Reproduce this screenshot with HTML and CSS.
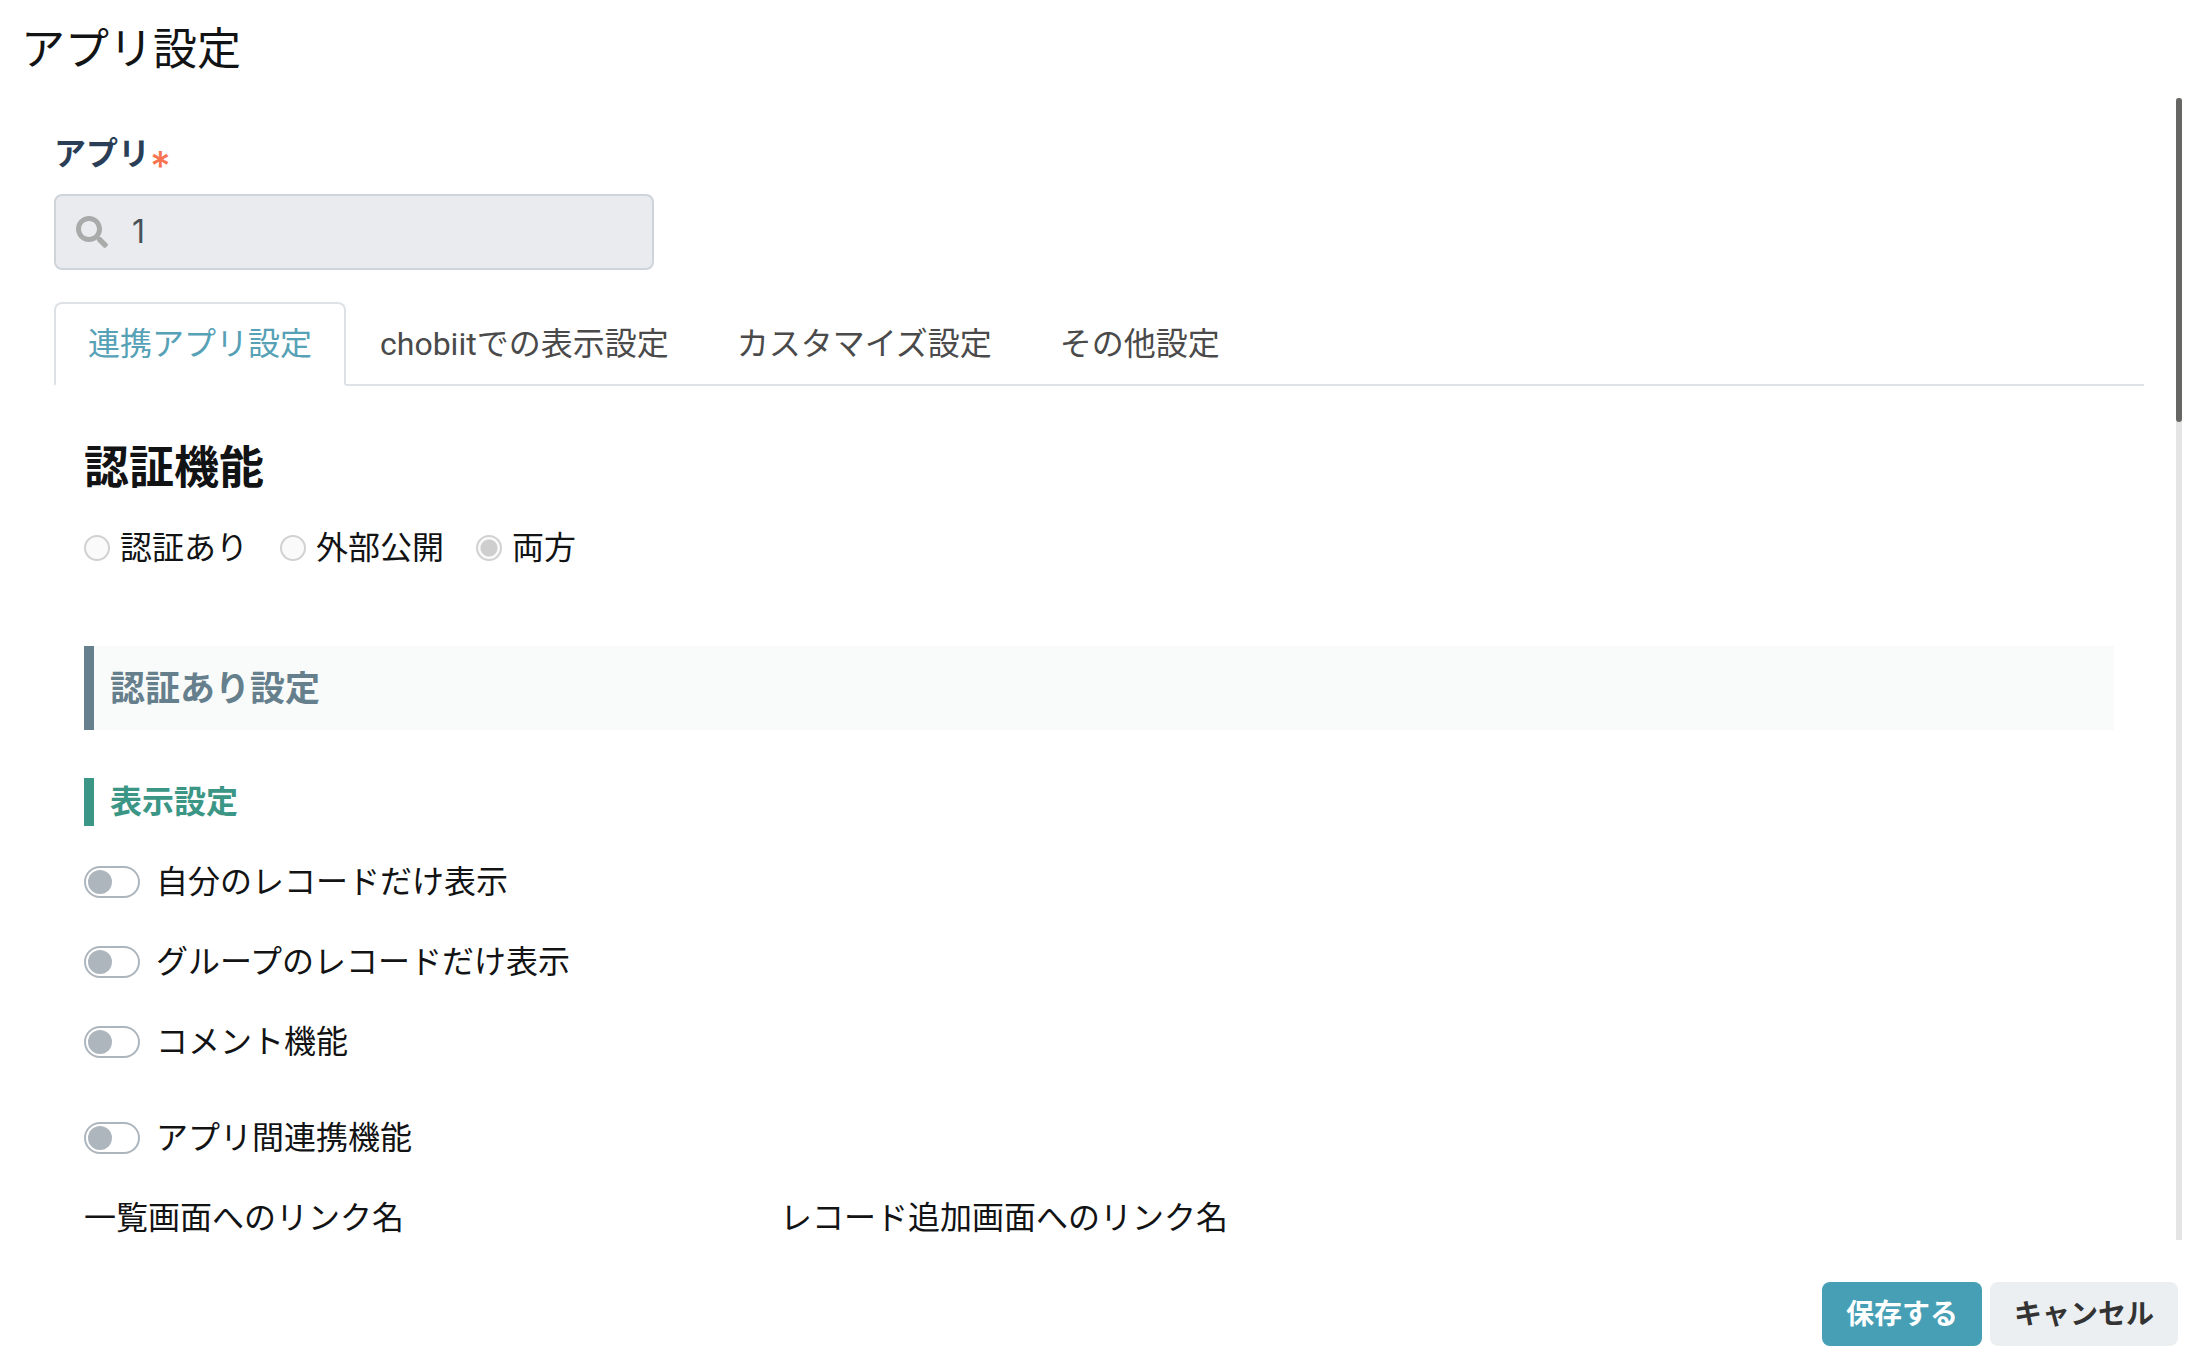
FILE: index.html
```html
<!DOCTYPE html>
<html lang="ja">
<head>
<meta charset="utf-8">
<meta name="viewport" content="width=device-width, initial-scale=1">
<title>アプリ設定</title>
<link rel="stylesheet" href="styles.css">
</head>
<body>
<main class="dialog">
  <header class="dialog-header">
    <h1 class="dialog-title">アプリ設定</h1>
  </header>

  <div class="dialog-body">
    <div class="content">
      <label class="field-label" for="app">アプリ<span class="required">*</span></label>
      <div class="search-field">
        <svg class="search-icon" viewBox="0 0 512 512" aria-hidden="true"><path d="M505 442.700L405.300 343c-4.500-4.500-10.600-7-17-7H372c27.600-35.300 44-79.700 44-128C416 93.100 322.900 0 208 0S0 93.100 0 208s93.100 208 208 208c48.300 0 92.700-16.400 128-44v16.300c0 6.400 2.500 12.500 7 17l99.700 99.700c9.400 9.400 24.600 9.400 33.900 0l28.300-28.300c9.400-9.400 9.400-24.600.1-34zM208 336c-70.700 0-128-57.200-128-128 0-70.700 57.200-128 128-128 70.700 0 128 57.200 128 128 0 70.700-57.200 128-128 128z"/></svg>
        <input class="search-input" id="app" type="text" value="1" disabled>
      </div>

      <nav class="tabs">
        <a class="tab tab-active" href="#link">連携アプリ設定</a>
        <a class="tab" href="#display">chobiitでの表示設定</a>
        <a class="tab" href="#customize">カスタマイズ設定</a>
        <a class="tab" href="#other">その他設定</a>
      </nav>

      <section class="panel" id="link">
        <h2 class="panel-title">認証機能</h2>
        <div class="radios">
          <label class="radio"><input type="radio" name="auth" disabled>認証あり</label>
          <label class="radio"><input type="radio" name="auth" disabled>外部公開</label>
          <label class="radio"><input type="radio" name="auth" disabled checked>両方</label>
        </div>

        <h3 class="banner">認証あり設定</h3>
        <h4 class="section-title">表示設定</h4>

        <div class="switches">
          <label class="switch"><input type="checkbox">自分のレコードだけ表示</label>
          <label class="switch"><input type="checkbox">グループのレコードだけ表示</label>
          <label class="switch"><input type="checkbox">コメント機能</label>
        </div>
        <div class="switches switches-linked">
          <label class="switch"><input type="checkbox">アプリ間連携機能</label>
        </div>

        <div class="link-names">
          <span>一覧画面へのリンク名</span>
          <span>レコード追加画面へのリンク名</span>
        </div>
      </section>
    </div>
    <div class="rail"><div class="rail-thumb"></div></div>
  </div>

  <footer class="dialog-footer">
    <button class="button button-primary" type="button">保存する</button>
    <button class="button" type="button">キャンセル</button>
  </footer>
</main>
</body>
</html>
```

FILE: styles.css
```css
* {
  box-sizing: border-box;
}

body {
  margin: 0;
  background: #fff;
  color: #121314;
  font-family: Inter, "Noto Sans CJK JP", sans-serif;
  font-size: 32px;
  line-height: 48px;
}

h1, h2, h3, h4 {
  margin: 0;
}

.dialog {
  display: flex;
  flex-direction: column;
  height: 100vh;
}

.dialog-header {
  padding: 17px 21px;
}

.dialog-title {
  font-size: 44px;
  font-weight: 400;
  line-height: 64px;
}

.dialog-body {
  display: flex;
  flex: 1;
  gap: 32px;
  min-height: 0;
  padding: 0 22px 0 54px;
}

.content {
  flex: 1;
  min-width: 0;
  padding-top: 32px;
  overflow: auto;
  scrollbar-width: none;
}

.rail {
  width: 6px;
  background: #e5e5e5;
}

.rail-thumb {
  height: 28%;
  min-height: 324px;
  border-radius: 3px;
  background: #666664;
}

.field-label {
  display: flex;
  height: 48px;
  margin-bottom: 16px;
  color: #2a3f57;
  font-weight: 700;
}

.required {
  color: #f8734f;
  font-size: 40px;
  font-weight: 500;
  line-height: 72px;
}

.search-field {
  display: flex;
  align-items: center;
  gap: 24px;
  max-width: 600px;
  height: 76px;
  margin-bottom: 32px;
  padding: 0 20px;
  border: 2px solid #ced4da;
  border-radius: 8px;
  background: #e9ebef;
}

.search-icon {
  width: 32px;
  height: 32px;
  fill: #aaa;
}

.search-input {
  flex: 1;
  min-width: 0;
  padding: 0;
  border: 0;
  background: none;
  color: #495057;
  font: inherit;
}

.tabs {
  display: flex;
  border-bottom: 2px solid #dee2e6;
  font-family: Roboto, "Noto Sans CJK JP", sans-serif;
}

.tab {
  height: 84px;
  margin-bottom: -2px;
  padding: 16px 32px;
  border: 2px solid transparent;
  border-radius: 8px 8px 0 0;
  color: #4a4a4a;
  text-decoration: none;
}

.tab-active {
  border-color: #dee2e6 #dee2e6 #fff;
  background: #fff;
  color: #56a1b6;
}

.panel {
  padding: 50px 30px 0;
}

.panel-title {
  margin-bottom: 24px;
  font-size: 45px;
  line-height: 64px;
}

.radios {
  display: flex;
  gap: 32px;
  margin-bottom: 74px;
}

.radio {
  display: flex;
  align-items: center;
  gap: 10px;
}

.radio input {
  appearance: none;
  width: 26px;
  height: 26px;
  margin: 0;
  border: 2px solid #d1d1d1;
  border-radius: 50%;
  background: #fafafa;
}

.radio input:checked {
  background: radial-gradient(circle, #cecece 8px, #fafafa 9px);
}

.banner {
  margin-bottom: 48px;
  padding: 18px 16px;
  border-left: 10px solid #667f8c;
  background: #f9fbfa;
  color: #667f8c;
  font-size: 35px;
}

.section-title {
  margin-bottom: 32px;
  padding-left: 16px;
  border-left: 10px solid #3b9686;
  color: #3b9686;
  font-size: 32px;
}

.switches {
  display: flex;
  flex-direction: column;
  align-items: flex-start;
  gap: 32px;
}

.switches-linked {
  margin-top: 48px;
}

.switch {
  display: flex;
  align-items: center;
  gap: 16px;
}

.switch input {
  appearance: none;
  width: 56px;
  height: 32px;
  margin: 0;
  padding: 2px;
  border: 2px solid #adb5bd;
  border-radius: 16px;
  background: #fff;
}

.switch input::before {
  content: "";
  display: block;
  width: 24px;
  height: 24px;
  border-radius: 50%;
  background: #adb5bd;
}

.switch input:checked::before {
  margin-left: auto;
}

.link-names {
  display: grid;
  grid-template-columns: 696px 1fr;
  margin-top: 36px;
  line-height: 40px;
}

.dialog-footer {
  display: flex;
  justify-content: flex-end;
  gap: 8px;
  padding: 42px 26px 22px;
}

.button {
  height: 64px;
  padding: 0 24px;
  border: 0;
  border-radius: 8px;
  background: #ebeff1;
  color: #333;
  font: inherit;
  font-size: 28px;
  font-weight: 700;
}

.button-primary {
  background: #469fb5;
  color: #fff;
}
```
